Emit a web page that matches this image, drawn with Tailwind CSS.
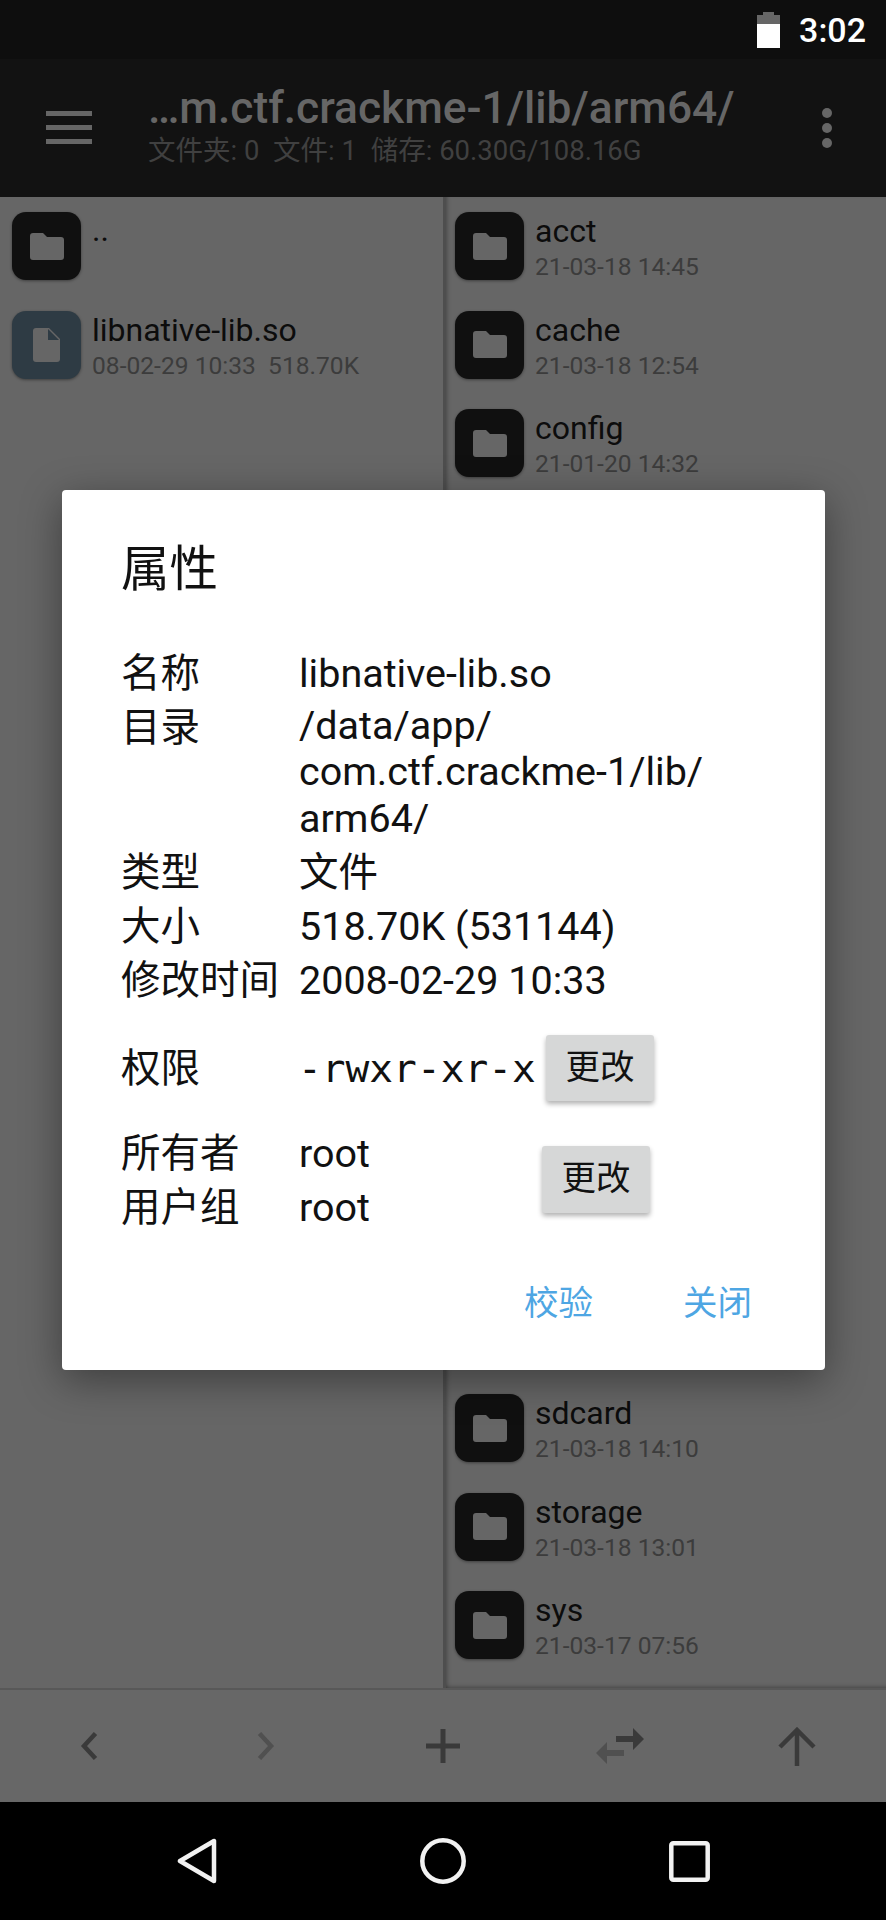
<!DOCTYPE html>
<html lang="zh">
<head>
<meta charset="utf-8">
<script src="https://cdn.jsdelivr.net/npm/@tailwindcss/browser@4"></script>
</head>
<body class="bg-black">
<div class="relative w-[886px] h-[1920px] overflow-hidden flex flex-col font-['Roboto','Noto_Sans_CJK_SC',sans-serif]">

  <!-- status bar -->
  <div class="h-[59px] shrink-0 bg-[#0e0e0e] flex items-center justify-end pr-[20px] gap-[19px]">
    <svg width="23" height="36" viewBox="0 0 23 36" class="mt-[1px]"><path d="M6 0h11v3h6v9H0V3h6z" fill="#666"/><rect y="12" width="23" height="24" fill="#fff"/></svg>
    <span class="text-[34px] leading-[40px] font-medium text-white">3:02</span>
  </div>

  <!-- header -->
  <div class="h-[138px] shrink-0 bg-[#121212] flex items-start relative z-10">
    <svg width="46" height="33" viewBox="0 0 46 33" class="ml-[46px] mt-[52px] shrink-0"><path d="M0 0h46v5H0zM0 14h46v5H0zM0 28h46v5H0z" fill="#666"/></svg>
    <div class="ml-[56px] flex-1 pt-[23px]">
      <div class="text-[44.300px] leading-[52px] font-medium text-[#666] whitespace-nowrap">…m.ctf.crackme-1/lib/arm64/</div>
      <div class="text-[27.500px] leading-[34px] text-[#404040] whitespace-pre">文件夹: 0  文件: 1  储存: 60.30G/108.16G</div>
    </div>
    <svg width="10" height="40" viewBox="0 0 10 40" class="mr-[54px] mt-[49px] shrink-0"><circle cx="5" cy="5" r="5" fill="#666"/><circle cx="5" cy="20" r="5" fill="#666"/><circle cx="5" cy="35" r="5" fill="#666"/></svg>
  </div>

  <!-- panes -->
  <div class="flex-1 flex bg-[#666] min-h-0">
    <div class="w-[443px] pl-[12px] pt-[15px] shrink-0">
      <div class="flex h-[98.5px]">
        <div class="w-[69px] h-[68px] rounded-[14px] bg-[#101010] shadow-[0_1px_3px_rgba(0,0,0,0.4)] flex items-center justify-center">
          <svg width="34" height="27" viewBox="0 0 34 27"><path d="M3 0h10l4 4h14a3 3 0 0 1 3 3v17a3 3 0 0 1-3 3H3a3 3 0 0 1-3-3V3a3 3 0 0 1 3-3z" fill="#666"/></svg>
        </div>
        <div class="ml-[11px] text-[32px] leading-[36px] text-[#0c0c0c]">..</div>
      </div>
      <div class="flex h-[98.5px]">
        <div class="w-[69px] h-[68px] rounded-[14px] bg-[#2e3b44] shadow-[0_1px_3px_rgba(0,0,0,0.4)] flex items-center justify-center">
          <svg width="27" height="34" viewBox="0 0 27 34"><path d="M3 0h13l11 11v20a3 3 0 0 1-3 3H3a3 3 0 0 1-3-3V3a3 3 0 0 1 3-3z" fill="#666"/><path d="M15 1v11h11z" fill="#2e3b44"/></svg>
        </div>
        <div class="ml-[11px]">
          <div class="text-[32px] leading-[36px] text-[#0c0c0c] mt-[1px]">libnative-lib.so</div>
          <div class="text-[24.600px] leading-[36px] text-[#3c3c3c] whitespace-pre">08-02-29 10:33  518.70K</div>
        </div>
      </div>
    </div>

    <div class="flex-1 w-0 border-l-[3px] border-[#4e4e4e] shadow-[inset_4px_0_4px_-3px_rgba(0,0,0,0.3),inset_0_-5px_4px_-4px_rgba(0,0,0,0.3)] pl-[9px] pt-[15px]">
      <div class="flex h-[98.5px]">
        <div class="w-[69px] h-[68px] rounded-[14px] bg-[#101010] shadow-[0_1px_3px_rgba(0,0,0,0.4)] flex items-center justify-center">
          <svg width="34" height="27" viewBox="0 0 34 27"><path d="M3 0h10l4 4h14a3 3 0 0 1 3 3v17a3 3 0 0 1-3 3H3a3 3 0 0 1-3-3V3a3 3 0 0 1 3-3z" fill="#666"/></svg>
        </div>
        <div class="ml-[11px]">
          <div class="text-[32px] leading-[36px] text-[#0c0c0c] mt-[1px]">acct</div>
          <div class="text-[24.600px] leading-[36px] text-[#3c3c3c]">21-03-18 14:45</div>
        </div>
      </div>
      <div class="flex h-[98.5px]">
        <div class="w-[69px] h-[68px] rounded-[14px] bg-[#101010] shadow-[0_1px_3px_rgba(0,0,0,0.4)] flex items-center justify-center">
          <svg width="34" height="27" viewBox="0 0 34 27"><path d="M3 0h10l4 4h14a3 3 0 0 1 3 3v17a3 3 0 0 1-3 3H3a3 3 0 0 1-3-3V3a3 3 0 0 1 3-3z" fill="#666"/></svg>
        </div>
        <div class="ml-[11px]">
          <div class="text-[32px] leading-[36px] text-[#0c0c0c] mt-[1px]">cache</div>
          <div class="text-[24.600px] leading-[36px] text-[#3c3c3c]">21-03-18 12:54</div>
        </div>
      </div>
      <div class="flex h-[98.5px]">
        <div class="w-[69px] h-[68px] rounded-[14px] bg-[#101010] shadow-[0_1px_3px_rgba(0,0,0,0.4)] flex items-center justify-center">
          <svg width="34" height="27" viewBox="0 0 34 27"><path d="M3 0h10l4 4h14a3 3 0 0 1 3 3v17a3 3 0 0 1-3 3H3a3 3 0 0 1-3-3V3a3 3 0 0 1 3-3z" fill="#666"/></svg>
        </div>
        <div class="ml-[11px]">
          <div class="text-[32px] leading-[36px] text-[#0c0c0c] mt-[1px]">config</div>
          <div class="text-[24.600px] leading-[36px] text-[#3c3c3c]">21-01-20 14:32</div>
        </div>
      </div>
      <div class="h-[886.5px]"></div>
      <div class="flex h-[98.5px]">
        <div class="w-[69px] h-[68px] rounded-[14px] bg-[#101010] shadow-[0_1px_3px_rgba(0,0,0,0.4)] flex items-center justify-center">
          <svg width="34" height="27" viewBox="0 0 34 27"><path d="M3 0h10l4 4h14a3 3 0 0 1 3 3v17a3 3 0 0 1-3 3H3a3 3 0 0 1-3-3V3a3 3 0 0 1 3-3z" fill="#666"/></svg>
        </div>
        <div class="ml-[11px]">
          <div class="text-[32px] leading-[36px] text-[#0c0c0c] mt-[1px]">sdcard</div>
          <div class="text-[24.600px] leading-[36px] text-[#3c3c3c]">21-03-18 14:10</div>
        </div>
      </div>
      <div class="flex h-[98.5px]">
        <div class="w-[69px] h-[68px] rounded-[14px] bg-[#101010] shadow-[0_1px_3px_rgba(0,0,0,0.4)] flex items-center justify-center">
          <svg width="34" height="27" viewBox="0 0 34 27"><path d="M3 0h10l4 4h14a3 3 0 0 1 3 3v17a3 3 0 0 1-3 3H3a3 3 0 0 1-3-3V3a3 3 0 0 1 3-3z" fill="#666"/></svg>
        </div>
        <div class="ml-[11px]">
          <div class="text-[32px] leading-[36px] text-[#0c0c0c] mt-[1px]">storage</div>
          <div class="text-[24.600px] leading-[36px] text-[#3c3c3c]">21-03-18 13:01</div>
        </div>
      </div>
      <div class="flex h-[68px]">
        <div class="w-[69px] h-[68px] rounded-[14px] bg-[#101010] shadow-[0_1px_3px_rgba(0,0,0,0.4)] flex items-center justify-center">
          <svg width="34" height="27" viewBox="0 0 34 27"><path d="M3 0h10l4 4h14a3 3 0 0 1 3 3v17a3 3 0 0 1-3 3H3a3 3 0 0 1-3-3V3a3 3 0 0 1 3-3z" fill="#666"/></svg>
        </div>
        <div class="ml-[11px]">
          <div class="text-[32px] leading-[36px] text-[#0c0c0c] mt-[1px]">sys</div>
          <div class="text-[24.600px] leading-[36px] text-[#3c3c3c]">21-03-17 07:56</div>
        </div>
      </div>
    </div>
  </div>

  <!-- bottom toolbar -->
  <div class="h-[114px] shrink-0 bg-[#676767] border-t-[2px] border-[#585858] grid grid-cols-5 items-center">
    <div class="flex justify-center"><svg width="18" height="28" viewBox="0 0 18 28"><path d="M15.500 1.500 4 14l11.500 12.500" fill="none" stroke="#3a3a3a" stroke-width="4.500"/></svg></div>
    <div class="flex justify-center"><svg width="18" height="28" viewBox="0 0 18 28"><path d="M2.500 1.500 14 14 2.500 26.500" fill="none" stroke="#505050" stroke-width="4.500"/></svg></div>
    <div class="flex justify-center"><svg width="34" height="34" viewBox="0 0 34 34"><path d="M14.500 0h5v14.500H34v5H19.500V34h-5V19.500H0v-5h14.500z" fill="#3a3a3a"/></svg></div>
    <div class="flex justify-center"><svg width="48" height="36" viewBox="0 0 48 36"><path d="M20 8h17V0l11 11-11 11v-8H20z" fill="#3a3a3a"/><path d="M28 22H11v-8L0 25l11 11v-8h17z" fill="#505050"/></svg></div>
    <div class="flex justify-center"><svg width="38" height="39" viewBox="0 0 38 39"><path d="M19 39V3M2 20 19 3l17 17" fill="none" stroke="#3a3a3a" stroke-width="4.500"/></svg></div>
  </div>

  <!-- nav bar -->
  <div class="h-[118px] shrink-0 bg-black grid grid-cols-3 w-[738px] mx-auto items-center">
    <div class="flex justify-center"><svg width="40" height="46" viewBox="0 0 40 46"><path d="M37 3v40L3 23z" fill="none" stroke="#f2f2f2" stroke-width="4.500" stroke-linejoin="round"/></svg></div>
    <div class="flex justify-center"><svg width="46" height="46" viewBox="0 0 46 46"><circle cx="23" cy="23" r="20.700" fill="none" stroke="#f2f2f2" stroke-width="4.500"/></svg></div>
    <div class="flex justify-center"><svg width="41" height="41" viewBox="0 0 41 41"><rect x="2.300" y="2.300" width="36.400" height="36.400" rx="2" fill="none" stroke="#f2f2f2" stroke-width="4.500"/></svg></div>
  </div>

  <!-- dialog -->
  <div class="absolute left-[62px] top-[490px] w-[763px] h-[880px] bg-white rounded-[4px] z-20 shadow-[0_10px_40px_rgba(0,0,0,0.4)] pl-[59px] text-[#111]">
    <div class="text-[48.500px] leading-[60px] mt-[50px]">属性</div>
    <div class="mt-[47px] text-[39.500px] font-normal">
      <div class="flex h-[54.500px] leading-[54px]"><div class="w-[178px] shrink-0">名称</div><div>libnative-lib.so</div></div>
      <div class="flex"><div class="w-[178px] shrink-0 leading-[54px] -mt-[1px]">目录</div><div class="pt-[1px] pb-[4px] leading-[46.500px] w-[440px]">/data/app/<br>com.ctf.crackme-1/lib/<br>arm64/</div></div>
      <div class="flex h-[54px] leading-[54px]"><div class="w-[178px] shrink-0">类型</div><div>文件</div></div>
      <div class="flex h-[54px] leading-[54px]"><div class="w-[178px] shrink-0">大小</div><div>518.70K (531144)</div></div>
      <div class="flex h-[54px] leading-[54px]"><div class="w-[178px] shrink-0">修改时间</div><div>2008-02-29 10:33</div></div>
      <div class="flex items-center mt-[27px] h-[66px]">
        <div class="w-[178px] shrink-0 pt-[2px]">权限</div>
        <div class="w-[248px] -ml-[1px] shrink-0 pt-[2px] font-['DejaVu_Sans_Mono',monospace] text-[39.500px]">-rwxr-xr-x</div>
        <div class="w-[108px] h-[66px] rounded-[3px] bg-[#d6d7d7] shadow-[0_3px_5px_rgba(0,0,0,0.3)] flex items-center justify-center text-[34.500px]">更改</div>
      </div>
      <div class="flex items-center mt-[26px]">
        <div class="w-[178px] shrink-0 leading-[54px]">所有者<br>用户组</div>
        <div class="w-[243px] shrink-0 leading-[54px]">root<br>root</div>
        <div class="w-[108px] h-[67px] -mt-[4px] rounded-[3px] bg-[#d6d7d7] shadow-[0_3px_5px_rgba(0,0,0,0.3)] flex items-center justify-center text-[34.500px]">更改</div>
      </div>
    </div>
    <div class="flex mt-[45px] text-[34.500px] leading-[46px] text-[#4ea6e3]">
      <div class="ml-[403px]">校验</div>
      <div class="ml-[90px]">关闭</div>
    </div>
  </div>
</div>
</body>
</html>
